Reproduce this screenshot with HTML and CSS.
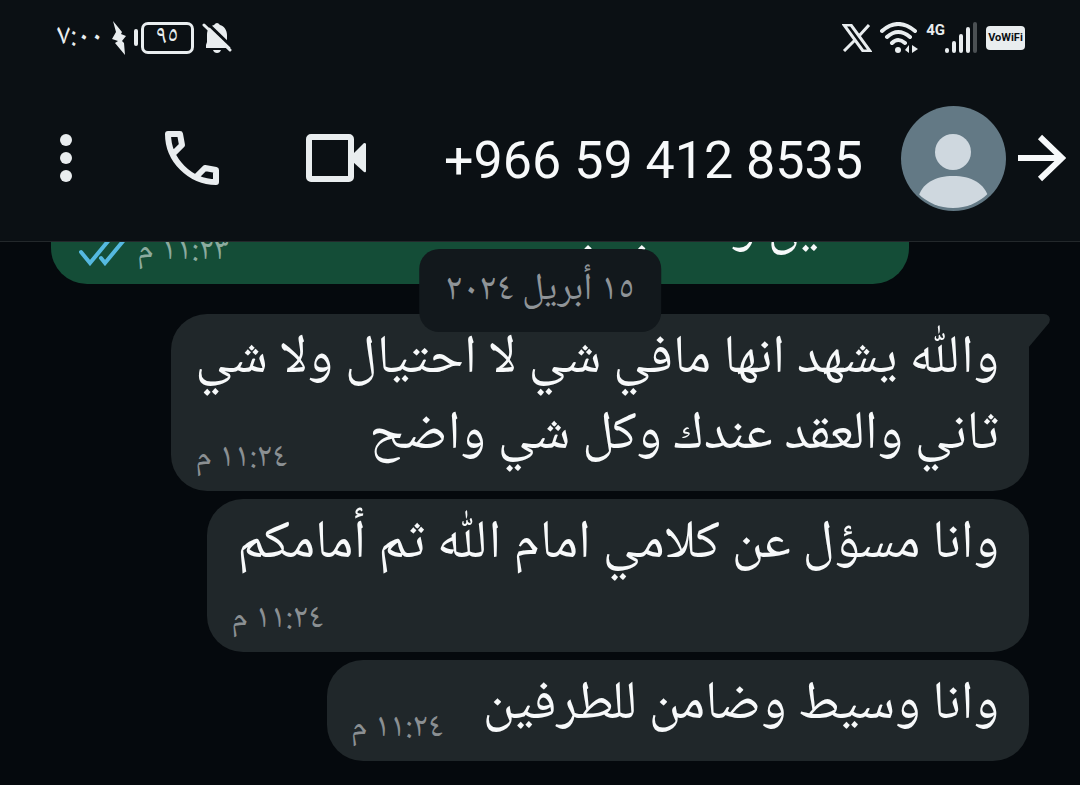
FILE: index.html
```html
<!DOCTYPE html>
<html lang="ar" dir="rtl">
<head>
    <meta charset="UTF-8">
    <meta name="viewport" content="width=device-width, initial-scale=1.0">
    <title>+966 59 412 8535</title>
    <link rel="stylesheet" href="styles.css">
</head>
<body>
    <div class="status-bar" dir="ltr">
        <div class="status-group">
            <span class="clock">٧:٠٠</span>
            <svg class="bolt" width="14" height="36" viewBox="0 0 14 36"><path d="M1 1L10 12L9 14L14 16L10 21L12 23L13 35L3 23L6 21L0 19L4 12Z"/></svg>
            <div class="battery">
                <span class="battery-tip"></span>
                <span class="battery-level">٩٥</span>
            </div>
            <svg class="bell" width="30" height="32" viewBox="0 0 30 32">
                <path d="M4 26V23L5 20V13C5 7 8 4 12 3Q15 -1 18 3C22 4 25 8 25 13V20L29 26Z"/>
                <path d="M11 28H19Q18 31 15 31Q12 31 11 28Z"/>
                <path class="slash-gap" d="M4 0L30 25"/>
                <path class="slash" d="M2 3L28 28"/>
            </svg>
        </div>
        <div class="status-group">
            <svg class="x-logo" width="30" height="28" viewBox="0 0 30 28">
                <path d="M2 1H9L28 27H21Z"/>
                <path d="M27 1L17 12M13 16L2 27"/>
            </svg>
            <svg class="wifi" width="38" height="32" viewBox="0 0 38 32">
                <path d="M2 9Q18 -5 35 9M7 15Q18 5 30 15M12 21Q18 15 25 21"/>
                <circle cx="18" cy="28" r="3"/>
                <path class="arrows" d="M29 23V31L25 28ZM32 23L38 27L32 31Z"/>
            </svg>
            <div class="signal">
                <span class="network">4G</span>
                <svg width="33" height="32" viewBox="0 0 33 32">
                    <path d="M2 28V29M9 21V29M16 14V29M23 7V29"/>
                    <path class="off" d="M30 2V29"/>
                </svg>
            </div>
            <span class="vowifi">VoWiFi</span>
        </div>
    </div>

    <header class="chat-header">
        <button class="back" aria-label="رجوع">
            <svg width="48" height="48" viewBox="0 0 48 48"><path d="M0 24H44M22 3L44 24L22 45"/></svg>
        </button>
        <svg class="avatar" width="105" height="105" viewBox="0 0 105 105">
            <defs><clipPath id="face"><circle cx="52" cy="52" r="50"/></clipPath></defs>
            <circle class="avatar-bg" cx="52.5" cy="52.5" r="52.5"/>
            <circle cx="52" cy="46" r="18"/>
            <path clip-path="url(#face)" d="M17 105V93C20 77 35 70 52 70C70 70 84 77 88 93V105Z"/>
        </svg>
        <h1 dir="ltr">+966 59 412 8535</h1>
        <div class="actions">
            <button class="video" aria-label="مكالمة فيديو">
                <svg width="60" height="48" viewBox="0 0 60 48">
                    <rect x="3" y="3" width="42" height="42" rx="2"/>
                    <path d="M47 20L58 9Q60 9 60 10V37Q60 39 58 38L47 28Z"/>
                </svg>
            </button>
            <button class="call" aria-label="مكالمة صوتية">
                <svg width="72" height="72" viewBox="0 0 72 72">
                    <path d="M18 31L26 23L24 12H12C12 38 34 60 60 60V48L49 46L41 54"/>
                </svg>
            </button>
            <button class="menu" aria-label="المزيد">
                <svg width="12" height="48" viewBox="0 0 12 48">
                    <circle cx="6" cy="6" r="6"/>
                    <circle cx="6" cy="24" r="6"/>
                    <circle cx="6" cy="42" r="6"/>
                </svg>
            </button>
        </div>
    </header>

    <main class="chat">
        <div class="date">١٥ أبريل ٢٠٢٤</div>

        <div class="message outgoing">
            <p>الحين و كتاب ب</p>
            <div class="meta">
                <time>١١:٢٣ م</time>
                <svg class="ticks" width="46" height="28" viewBox="0 0 46 28"><path d="M2 14L11 25L30 2M22 20L26 25L45 2"/></svg>
            </div>
        </div>

        <div class="message incoming first">
            <p>واللّٰه يشهد انها مافي شي لا احتيال ولا شي<br>ثاني والعقد عندك وكل شي واضح</p>
            <div class="meta"><time>١١:٢٤ م</time></div>
            <svg class="tail" width="22" height="34" viewBox="0 0 22 34"><path d="M0 0H16Q24 1 21 9L0 34Z"/></svg>
        </div>

        <div class="message incoming stacked">
            <p>وانا مسؤل عن كلامي امام اللّٰه ثم أمامكم</p>
            <div class="meta"><time>١١:٢٤ م</time></div>
        </div>

        <div class="message incoming inline">
            <p>وانا وسيط وضامن للطرفين</p>
            <div class="meta"><time>١١:٢٤ م</time></div>
        </div>
    </main>
</body>
</html>
```
FILE: styles.css
```css
* {
    box-sizing: border-box;
}

body {
    margin: 0;
    height: 100vh;
    display: flex;
    flex-direction: column;
    background: #05090d;
    color: #f7f9fa;
    font-family: "Noto Naskh Arabic", "DejaVu Sans", sans-serif;
}

h1, p {
    margin: 0;
    font-weight: normal;
}

button {
    display: flex;
    align-items: center;
    justify-content: center;
    padding: 0;
    border: none;
    background: none;
    cursor: pointer;
}

svg {
    flex: none;
    fill: #e9edef;
}

/* status bar */
.status-bar {
    display: flex;
    justify-content: space-between;
    flex: none;
    height: 75px;
    padding: 0 55px 0 57px;
    background: #0b1014;
    color: #e9edef;
}

.status-group {
    display: flex;
    align-items: center;
    gap: 8px;
}

.clock {
    font-size: 30px;
    line-height: 36px;
}

.battery {
    display: flex;
    align-items: center;
    gap: 3px;
}

.battery-tip {
    width: 4px;
    height: 17px;
    border-radius: 2px;
    background: #e9edef;
}

.battery-level {
    width: 53px;
    height: 32px;
    border: 3px solid #e9edef;
    border-radius: 7px;
    font-size: 26px;
    line-height: 24px;
    text-align: center;
}

.bell .slash {
    stroke: #e9edef;
    stroke-width: 3;
    stroke-linecap: round;
}

.bell .slash-gap {
    stroke: #0b1014;
    stroke-width: 3;
}

.x-logo {
    fill: none;
    stroke: #e9edef;
    stroke-width: 3;
}

.wifi path {
    fill: none;
    stroke: #e9edef;
    stroke-width: 4;
    stroke-linecap: round;
}

.wifi .arrows {
    fill: #e9edef;
    stroke: none;
}

.signal {
    display: flex;
}

.network {
    font: bold 15px/16px Roboto, sans-serif;
}

.signal path {
    stroke: #e9edef;
    stroke-width: 4;
    stroke-linecap: round;
}

.signal .off {
    stroke: #4b5053;
}

.vowifi {
    width: 39px;
    height: 24px;
    border-radius: 4px;
    background: #e9edef;
    color: #0b1014;
    font: bold 11px/24px Roboto, sans-serif;
    text-align: center;
}

/* header */
.chat-header {
    display: flex;
    align-items: center;
    flex: none;
    height: 167px;
    padding: 0 14px 0 30px;
    border-bottom: 1px solid #23282b;
    background: #0b1014;
}

.back svg {
    fill: none;
    stroke: #f7f9fa;
    stroke-width: 6;
}

.avatar {
    margin: 0 12px 0 38px;
    fill: #cfd8df;
}

.avatar-bg {
    fill: #637985;
}

h1 {
    padding-top: 6px;
    font: 52px/64px Roboto, sans-serif;
    white-space: nowrap;
}

.actions {
    display: flex;
    gap: 54px;
    margin-right: auto;
}

.actions button {
    width: 72px;
    height: 72px;
}

.actions .video {
    width: 108px;
}

.video rect, .call path {
    fill: none;
    stroke: #e9edef;
    stroke-width: 6;
    stroke-linejoin: round;
}

/* messages */
.chat {
    position: relative;
    display: flex;
    flex: 1;
    flex-direction: column;
    justify-content: flex-end;
    gap: 8px;
    min-height: 0;
    padding: 0 51px 24px;
    overflow: hidden;
}

.date {
    position: absolute;
    z-index: 1;
    top: 7px;
    left: 50%;
    transform: translateX(-50%);
    padding: 18px 26px 17px;
    border-radius: 20px;
    background: #12181c;
    color: #8f9498;
    font-size: 38px;
    line-height: 48px;
    white-space: nowrap;
}

.message {
    position: relative;
    flex: none;
    align-self: flex-start;
    padding: 8px 30px 17px;
    border-radius: 36px;
    background: #20272a;
    font-size: 54px;
    line-height: 76px;
}

.outgoing {
    align-self: flex-end;
    width: calc(100% - 120px);
    margin-bottom: 22px;
    background: #144d37;
}

.first {
    padding-left: 24px;
    border-top-right-radius: 0;
}

.meta {
    position: absolute;
    bottom: 12px;
    left: 24px;
    display: flex;
    align-items: center;
    gap: 12px;
    color: #8b9093;
    font-size: 34px;
    line-height: 40px;
}

.outgoing .meta {
    left: 28px;
    color: #8cab9f;
}

.stacked {
    padding-bottom: 69px;
}

.inline {
    padding-left: 156px;
}

.ticks {
    fill: none;
    stroke: #55b9e0;
    stroke-width: 4;
    stroke-linecap: round;
}

.tail {
    position: absolute;
    top: 0;
    right: -21px;
    fill: #20272a;
}
```
